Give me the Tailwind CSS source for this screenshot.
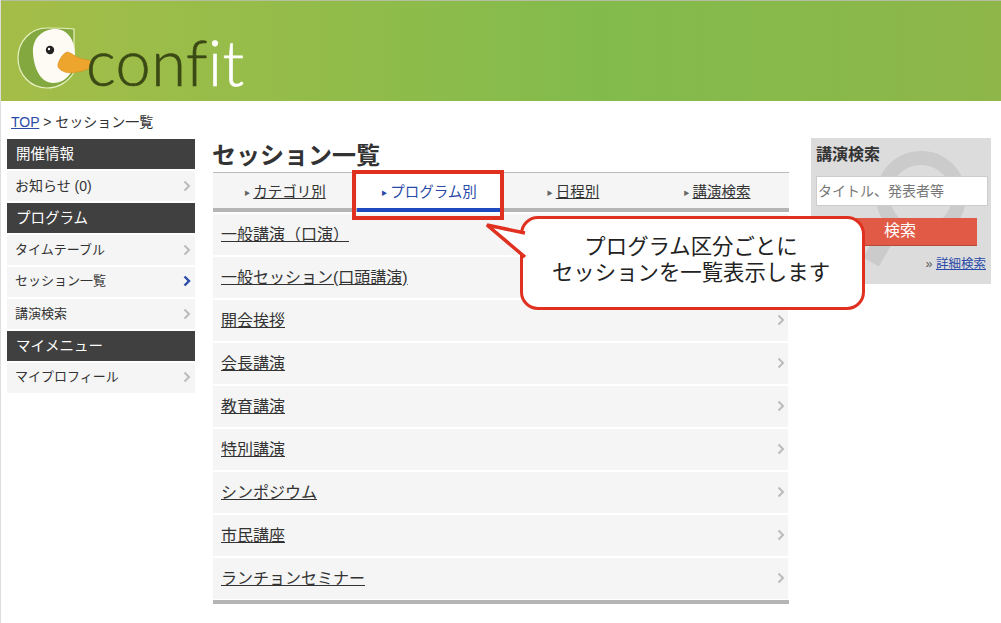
<!DOCTYPE html>
<html lang="ja">
<head>
    <meta charset="UTF-8">
    <title>セッション一覧</title>
    <script src="https://cdn.jsdelivr.net/npm/@tailwindcss/browser@4"></script>
</head>
<body class="bg-white text-[#333] font-['Liberation_Sans','Noto_Sans_CJK_JP',sans-serif] text-sm">
<div class="relative w-[1001px] h-[623px] overflow-hidden border-l border-[#ddd]">

    <!-- header -->
    <header class="relative h-[101px] -ml-px border-t border-[#b5bfa0] bg-gradient-to-r from-[#a4bd48] via-[#82bb4c] via-60% to-[#8eb649]">
        <svg class="absolute left-[17px] top-[24px]" width="78" height="66" viewBox="0 0 78 66">
            <path d="M56 4 C48 3 38 3 30 3 C13 3 1 17 1 33 C1 49 13 63 30 63 C42 63 52 56 57 47 L57 4 Z" fill="#83a83f" stroke="#e8f0c0" stroke-width="1.2"/>
            <path d="M16 28 C15 13 26 4 38 4 C50 4 58 14 58 30 C58 46 50 58 36 58 C24 58 17 44 16 28 Z" fill="#fdfbf3"/>
            <circle cx="33" cy="25" r="4.2" fill="#222"/>
            <circle cx="32" cy="24" r="1.2" fill="#fff"/>
            <path d="M41 39 C43 33 47 27 51 27 C56 29 60 33 66 34 C71 35 76 36 76 39 C74 43 68 46 60 47 C52 49 44 47 41 42 Z" fill="#eda52e" stroke="#d88f22" stroke-width="0.6"/>
        </svg>
        <div class="absolute left-[86px] top-[23px] font-['Lato',sans-serif] font-light text-[63px] leading-[76px] tracking-[0.5px] [-webkit-text-stroke:0.6px_currentColor] text-[#3b4a15]">conf<span class="text-white">it</span></div>
    </header>

    <!-- breadcrumb -->
    <div class="h-[37px] pl-[10px] pt-[11px] leading-[20px]">
        <a href="#" class="underline text-[#2a4aa8]">TOP</a> &gt; セッション一覧
    </div>

    <div class="flex items-start">
        <!-- left nav -->
        <nav class="w-[188px] ml-[6px] mt-px flex flex-col text-[13px]">
            <h3 class="h-[30px] bg-[#404040] text-white text-[14.5px] pl-[9px] leading-[30px]">開催情報</h3>
            <a class="mt-[2px] mb-[2px] h-[30px] bg-[#f5f5f5] pl-[8px] pr-[4px] flex items-center justify-between text-[14px]">お知らせ (0)<svg width="8" height="12" viewBox="0 0 8 12" fill="none" stroke="#bbb" stroke-width="2"><path d="M1.5 1.5 L6 6 L1.5 10.5"/></svg></a>
            <h3 class="h-[30px] bg-[#404040] text-white text-[14.5px] pl-[9px] leading-[30px]">プログラム</h3>
            <a class="mt-[2px] h-[30px] bg-[#f5f5f5] pl-[8px] pr-[4px] flex items-center justify-between">タイムテーブル<svg width="8" height="12" viewBox="0 0 8 12" fill="none" stroke="#bbb" stroke-width="2"><path d="M1.5 1.5 L6 6 L1.5 10.5"/></svg></a>
            <a class="mt-[2px] h-[30px] bg-[#f5f5f5] pl-[8px] pr-[4px] pb-[2px] flex items-center justify-between">セッション一覧<svg width="8" height="12" viewBox="0 0 8 12" fill="none" stroke="#2a4aa8" stroke-width="2.4"><path d="M1.5 1.5 L6 6 L1.5 10.5"/></svg></a>
            <a class="mt-[2px] mb-[2px] h-[30px] bg-[#f5f5f5] pl-[8px] pr-[4px] flex items-center justify-between">講演検索<svg width="8" height="12" viewBox="0 0 8 12" fill="none" stroke="#bbb" stroke-width="2"><path d="M1.5 1.5 L6 6 L1.5 10.5"/></svg></a>
            <h3 class="h-[30px] bg-[#404040] text-white text-[14.5px] pl-[9px] leading-[30px]">マイメニュー</h3>
            <a class="mt-[2px] h-[30px] bg-[#f5f5f5] pl-[8px] pr-[4px] pb-[2px] flex items-center justify-between">マイプロフィール<svg width="8" height="12" viewBox="0 0 8 12" fill="none" stroke="#bbb" stroke-width="2"><path d="M1.5 1.5 L6 6 L1.5 10.5"/></svg></a>
        </nav>

        <!-- main -->
        <main class="w-[576px] ml-[18px]">
            <h1 class="h-[34px] text-[24px] leading-[36px] font-bold text-[#333] -ml-px">セッション一覧</h1>
            <div class="grid grid-cols-4 grid-rows-[35px] h-[40px] border-t border-[#bbb] border-b-4 border-b-[#b5b5b5] bg-[#f5f5f5] text-[14.5px] text-center leading-[38px]">
                <div><span class="text-[6px] text-[#666] align-[2px] mr-[3px]">▶</span><a class="underline">カテゴリ別</a></div>
                <div class="h-[39px] bg-white border-b-4 border-[#1f49c0] text-[#2a4aa8]"><span class="text-[6px] align-[2px] mr-[3px]">▶</span>プログラム別</div>
                <div><span class="text-[6px] text-[#666] align-[2px] mr-[3px]">▶</span><a class="underline">日程別</a></div>
                <div><span class="text-[6px] text-[#666] align-[2px] mr-[3px]">▶</span><a class="underline">講演検索</a></div>
            </div>
            <ul class="flex flex-col gap-[2px] mt-[2px] mr-[1px] text-[16px] text-[#333]">
                <li class="h-[41px] bg-[#f5f5f5] pl-[8px] pr-[3px] flex items-center justify-between"><a class="underline mt-[2px]">一般講演（口演）</a></li>
                <li class="h-[41px] bg-[#f5f5f5] pl-[8px] pr-[3px] flex items-center justify-between"><a class="underline mt-[2px]">一般セッション(口頭講演)</a></li>
                <li class="h-[41px] bg-[#f5f5f5] pl-[8px] pr-[3px] flex items-center justify-between"><a class="underline mt-[2px]">開会挨拶</a><svg class="-mt-[2px]" width="8" height="12" viewBox="0 0 8 12" fill="none" stroke="#bbb" stroke-width="2"><path d="M1.5 1.5 L6 6 L1.5 10.5"/></svg></li>
                <li class="h-[41px] bg-[#f5f5f5] pl-[8px] pr-[3px] flex items-center justify-between"><a class="underline mt-[2px]">会長講演</a><svg class="-mt-[2px]" width="8" height="12" viewBox="0 0 8 12" fill="none" stroke="#bbb" stroke-width="2"><path d="M1.5 1.5 L6 6 L1.5 10.5"/></svg></li>
                <li class="h-[41px] bg-[#f5f5f5] pl-[8px] pr-[3px] flex items-center justify-between"><a class="underline mt-[2px]">教育講演</a><svg class="-mt-[2px]" width="8" height="12" viewBox="0 0 8 12" fill="none" stroke="#bbb" stroke-width="2"><path d="M1.5 1.5 L6 6 L1.5 10.5"/></svg></li>
                <li class="h-[41px] bg-[#f5f5f5] pl-[8px] pr-[3px] flex items-center justify-between"><a class="underline mt-[2px]">特別講演</a><svg class="-mt-[2px]" width="8" height="12" viewBox="0 0 8 12" fill="none" stroke="#bbb" stroke-width="2"><path d="M1.5 1.5 L6 6 L1.5 10.5"/></svg></li>
                <li class="h-[41px] bg-[#f5f5f5] pl-[8px] pr-[3px] flex items-center justify-between"><a class="underline mt-[2px]">シンポジウム</a><svg class="-mt-[2px]" width="8" height="12" viewBox="0 0 8 12" fill="none" stroke="#bbb" stroke-width="2"><path d="M1.5 1.5 L6 6 L1.5 10.5"/></svg></li>
                <li class="h-[41px] bg-[#f5f5f5] pl-[8px] pr-[3px] flex items-center justify-between"><a class="underline mt-[2px]">市民講座</a><svg class="-mt-[2px]" width="8" height="12" viewBox="0 0 8 12" fill="none" stroke="#bbb" stroke-width="2"><path d="M1.5 1.5 L6 6 L1.5 10.5"/></svg></li>
                <li class="h-[41px] bg-[#f5f5f5] pl-[8px] pr-[3px] flex items-center justify-between"><a class="underline mt-[2px]">ランチョンセミナー</a><svg class="-mt-[2px]" width="8" height="12" viewBox="0 0 8 12" fill="none" stroke="#bbb" stroke-width="2"><path d="M1.5 1.5 L6 6 L1.5 10.5"/></svg></li>
            </ul>
            <div class="h-[4px] mt-[1px] bg-[#b5b5b5]"></div>
        </main>

        <!-- search box -->
        <aside class="relative w-[180px] h-[146px] ml-[22px] bg-[#dcdcdc] overflow-hidden">
            <svg class="absolute left-[40px] top-[10px]" width="130" height="136" viewBox="0 0 130 136" fill="none" stroke="#cbcbcb" stroke-width="14"><circle cx="70" cy="48" r="38"/><path d="M42 76 L20 114" stroke-width="18"/></svg>
            <div class="relative pl-[5px]">
                <h3 class="h-[38px] text-[16px] font-bold leading-[34px]">講演検索</h3>
                <input type="text" placeholder="タイトル、発表者等" class="block w-[172px] h-[30px] bg-white border border-[#ccc] px-[1px] text-[14px] placeholder:text-[#777]">
                <button class="block w-[154px] h-[28px] mt-[12px] ml-[7px] bg-[#e05a46] border-b border-[#b44a3a] text-white text-[16px]">検索</button>
                <p class="mt-[10px] pr-[5px] text-right text-[12.5px] text-[#555]">» <a class="underline text-[#2a4aa8]">詳細検索</a></p>
            </div>
        </aside>
    </div>

    <!-- annotation over the page -->
    <div class="absolute left-[351px] top-[170px] w-[152px] h-[50px] border-4 border-[#e03020]"></div>
    <div class="absolute left-[519px] top-[216px] w-[345px] h-[94px] pb-[6px] pr-[3px] bg-white border-[3.5px] border-[#e03020] rounded-[18px] flex flex-col items-center justify-center text-[21.4px] leading-[26px] text-[#222]">
        <span>プログラム区分ごとに</span>
        <span>セッションを一覧表示します</span>
    </div>
    <svg class="absolute left-[480px] top-[215px]" width="50" height="50" viewBox="0 0 50 50">
        <path d="M44 18 L6 10 L44 42" fill="#fff" stroke="#e03020" stroke-width="3.5" stroke-linejoin="miter"/>
    </svg>
</div>
</body>
</html>
